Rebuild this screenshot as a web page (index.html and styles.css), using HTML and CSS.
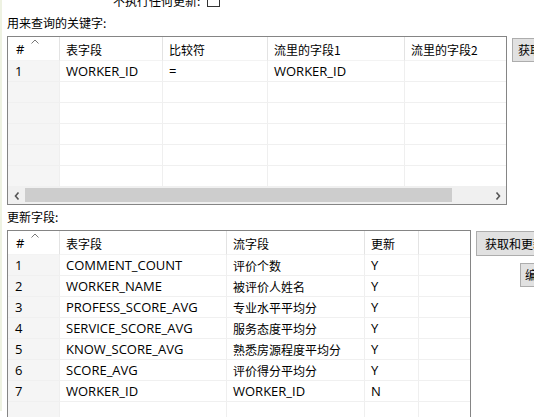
FILE: index.html
```html
<!DOCTYPE html>
<html>
<head>
<meta charset="utf-8">
<link rel="stylesheet" href="styles.css">
</head>
<body>
<div class="page">
  <div class="opt-row"><span class="zh">不执行任何更新:</span><span class="checkbox"></span></div>
  <div class="label zh">用来查询的关键字:</div>
  <div class="section">
    <div class="grid-box key-box">
      <div class="row head key-cols">
        <div class="cell num">#<svg class="sort" width="8" height="5" viewBox="0 0 8 5"><polyline points="0.5,4.5 4,1 7.5,4.5" fill="none" stroke="#777" stroke-width="1"/></svg></div>
        <div class="cell zh">表字段</div>
        <div class="cell zh">比较符</div>
        <div class="cell zh">流里的字段1</div>
        <div class="cell zh">流里的字段2</div>
      </div>
      <div class="row key-cols">
        <div class="cell num">1</div>
        <div class="cell">WORKER_ID</div>
        <div class="cell">=</div>
        <div class="cell">WORKER_ID</div>
        <div class="cell"></div>
      </div>
      <div class="row key-cols"><div class="cell num"></div><div class="cell"></div><div class="cell"></div><div class="cell"></div><div class="cell"></div></div>
      <div class="row key-cols"><div class="cell num"></div><div class="cell"></div><div class="cell"></div><div class="cell"></div><div class="cell"></div></div>
      <div class="row key-cols"><div class="cell num"></div><div class="cell"></div><div class="cell"></div><div class="cell"></div><div class="cell"></div></div>
      <div class="row key-cols"><div class="cell num"></div><div class="cell"></div><div class="cell"></div><div class="cell"></div><div class="cell"></div></div>
      <div class="row key-cols"><div class="cell num"></div><div class="cell"></div><div class="cell"></div><div class="cell"></div><div class="cell"></div></div>
      <div class="hscroll">
        <div class="arrow"><svg width="6" height="8" viewBox="0 0 6 8"><polyline points="4.5,0.5 1.5,4 4.5,7.5" fill="none" stroke="#555" stroke-width="1.6"/></svg></div>
        <div class="thumb"></div>
        <div class="track"></div>
        <div class="arrow"><svg width="6" height="8" viewBox="0 0 6 8"><polyline points="1.5,0.5 4.5,4 1.5,7.5" fill="none" stroke="#555" stroke-width="1.6"/></svg></div>
      </div>
    </div>
    <div class="side key-side">
      <button class="btn zh">获取字段</button>
    </div>
  </div>
  <div class="label label2 zh">更新字段:</div>
  <div class="section">
    <div class="grid-box upd-box">
      <div class="row head upd-cols">
        <div class="cell num">#<svg class="sort" width="8" height="5" viewBox="0 0 8 5"><polyline points="0.5,4.5 4,1 7.5,4.5" fill="none" stroke="#777" stroke-width="1"/></svg></div>
        <div class="cell zh">表字段</div>
        <div class="cell zh">流字段</div>
        <div class="cell zh">更新</div>
        <div class="cell"></div>
      </div>
      <div class="row upd-cols"><div class="cell num">1</div><div class="cell">COMMENT_COUNT</div><div class="cell zh">评价个数</div><div class="cell">Y</div><div class="cell"></div></div>
      <div class="row upd-cols"><div class="cell num">2</div><div class="cell">WORKER_NAME</div><div class="cell zh">被评价人姓名</div><div class="cell">Y</div><div class="cell"></div></div>
      <div class="row upd-cols"><div class="cell num">3</div><div class="cell">PROFESS_SCORE_AVG</div><div class="cell zh">专业水平平均分</div><div class="cell">Y</div><div class="cell"></div></div>
      <div class="row upd-cols"><div class="cell num">4</div><div class="cell">SERVICE_SCORE_AVG</div><div class="cell zh">服务态度平均分</div><div class="cell">Y</div><div class="cell"></div></div>
      <div class="row upd-cols"><div class="cell num">5</div><div class="cell">KNOW_SCORE_AVG</div><div class="cell zh">熟悉房源程度平均分</div><div class="cell">Y</div><div class="cell"></div></div>
      <div class="row upd-cols"><div class="cell num">6</div><div class="cell">SCORE_AVG</div><div class="cell zh">评价得分平均分</div><div class="cell">Y</div><div class="cell"></div></div>
      <div class="row upd-cols"><div class="cell num">7</div><div class="cell">WORKER_ID</div><div class="cell">WORKER_ID</div><div class="cell">N</div><div class="cell"></div></div>
      <div class="row upd-cols"><div class="cell num"></div><div class="cell"></div><div class="cell"></div><div class="cell"></div><div class="cell"></div></div>
    </div>
    <div class="side upd-side">
      <button class="btn btn-wide zh">获取和更新字段</button>
      <button class="btn btn-edit zh">编辑映射</button>
    </div>
  </div>
</div>
</body>
</html>
```

FILE: styles.css
```css
* { box-sizing: border-box; }
html, body { margin: 0; padding: 0; background: #fff; }
body {
  width: 534px;
  height: 417px;
  overflow: hidden;
  font-family: "Open Sans", "Noto Sans CJK SC", sans-serif;
  font-size: 13px;
  color: #000;
}
.zh {
  font-family: "Noto Sans CJK SC", "Open Sans", sans-serif;
  font-size: 12px;
}
.page {
  border-left: 2px solid #eef2e2;
  padding-left: 5px;
  height: 417px;
}
.opt-row {
  display: flex;
  align-items: center;
  height: 13px;
  margin-top: -6px;
  padding-left: 106px;
  gap: 7px;
  line-height: 13px;
}
.checkbox {
  width: 13px;
  height: 13px;
  border: 1px solid #333;
  background: #fff;
}
.label {
  line-height: 16px;
  padding-top: 8px;
  margin-bottom: 5px;
  white-space: nowrap;
}
.label2 { padding-top: 4px; }
.section {
  display: flex;
  align-items: flex-start;
}
.grid-box {
  border: 1px solid #858585;
  background: #fff;
  flex-shrink: 0;
}
.key-box { width: 500px; height: 169px; }
.upd-box { width: 464px; }
.row {
  display: grid;
  height: 21px;
}
.row.head { height: 24px; }
.key-cols { grid-template-columns: 52px 103px 105px 137px 101px; }
.upd-cols { grid-template-columns: 52px 167px 138px 54px 51px; }
.cell {
  position: relative;
  border-right: 1px solid #efefef;
  border-bottom: 1px solid #f0f0f0;
  padding-left: 6px;
  display: flex;
  align-items: center;
  white-space: nowrap;
  overflow: hidden;
}
.cell:last-child { border-right: none; }
.cell.num { background: #f5f5f5; padding-left: 7px; }
.head .cell { border-right-color: #e3e3e3; border-bottom-color: #f3f3f3; padding-top: 1px; }
.head .cell:last-child { border-right: none; }
.head .cell.num { background: #fff; padding-left: 8px; }
.sort {
  position: absolute;
  left: 23px;
  top: 2px;
}
.hscroll {
  display: flex;
  height: 17px;
  background: #f0f0f0;
}
.arrow {
  width: 17px;
  display: flex;
  align-items: center;
  justify-content: center;
}
.thumb {
  width: 427px;
  margin: 1px 0 2px;
  background: #cdcdcd;
}
.track { flex: 1; }
.side {
  display: flex;
  flex-direction: column;
  align-items: flex-start;
  flex-shrink: 0;
}
.key-side { margin-left: 5px; padding-top: 2px; }
.upd-side { margin-left: 5px; padding-top: 1px; }
.btn {
  height: 24px;
  padding: 0 5px;
  background: #e1e1e1;
  border: 1px solid #adadad;
  color: #000;
  white-space: nowrap;
  line-height: 22px;
  width: 80px;
  text-align: left;
}
.btn-wide { padding-left: 8px; width: 100px; height: 25px; }
.btn-edit { margin-top: 7px; margin-left: 44px; padding-left: 4px; }
```
